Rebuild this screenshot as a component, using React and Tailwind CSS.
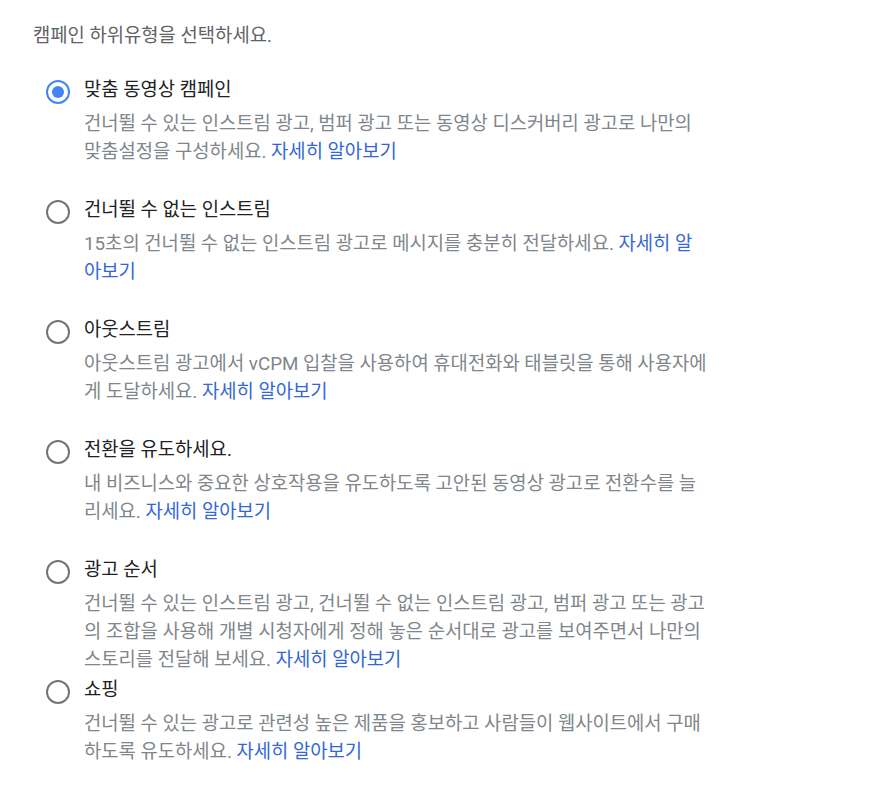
import React, { useState } from 'react';

const options = [
  {
    id: 'custom',
    title: '맞춤 동영상 캠페인',
    desc: '건너뛸 수 있는 인스트림 광고, 범퍼 광고 또는 동영상 디스커버리 광고로 나만의 맞춤설정을 구성하세요.',
  },
  {
    id: 'nonskip',
    title: '건너뛸 수 없는 인스트림',
    desc: '15초의 건너뛸 수 없는 인스트림 광고로 메시지를 충분히 전달하세요.',
  },
  {
    id: 'outstream',
    title: '아웃스트림',
    desc: '아웃스트림 광고에서 vCPM 입찰을 사용하여 휴대전화와 태블릿을 통해 사용자에게 도달하세요.',
  },
  {
    id: 'conversion',
    title: '전환을 유도하세요.',
    desc: '내 비즈니스와 중요한 상호작용을 유도하도록 고안된 동영상 광고로 전환수를 늘리세요.',
  },
  {
    id: 'sequence',
    title: '광고 순서',
    desc: '건너뛸 수 있는 인스트림 광고, 건너뛸 수 없는 인스트림 광고, 범퍼 광고 또는 광고의 조합을 사용해 개별 시청자에게 정해 놓은 순서대로 광고를 보여주면서 나만의 스토리를 전달해 보세요.',
  },
  {
    id: 'shopping',
    title: '쇼핑',
    desc: '건너뛸 수 있는 광고로 관련성 높은 제품을 홍보하고 사람들이 웹사이트에서 구매하도록 유도하세요.',
  },
];

const Radio = ({ checked }) => (
  <span
    className={`flex h-[24px] w-[24px] shrink-0 items-center justify-center rounded-full border-2 ${
      checked ? 'border-[#4285f4]' : 'border-[#757575]'
    }`}
  >
    {checked && <span className="h-[12px] w-[12px] rounded-full bg-[#4285f4]" />}
  </span>
);

export default function App() {
  const [selected, setSelected] = useState('custom');

  return (
    <div
      className="min-h-[790px] bg-white pl-[33px] pt-[22px] text-[18.8px]"
      style={{ fontFamily: 'Roboto, "Noto Sans CJK KR", sans-serif' }}
    >
      <p className="leading-[28px] text-[#5f6368]">캠페인 하위유형을 선택하세요.</p>

      <div className="mt-[26px] flex flex-col">
        {options.map((opt) => (
          <div
            key={opt.id}
            className="flex h-[120px] cursor-pointer gap-[14px] pl-[13px]"
            onClick={() => setSelected(opt.id)}
          >
            <div className="pt-[4px]">
              <Radio checked={selected === opt.id} />
            </div>
            <div className="w-[624px]">
              <div className="leading-[28px] text-[#202124]">{opt.title}</div>
              <p className="mt-[6px] leading-[28px] text-[#80868b]">
                {opt.desc}{' '}
                <a href="#" className="text-[#3367d6]" onClick={(e) => e.preventDefault()}>
                  자세히 알아보기
                </a>
              </p>
            </div>
          </div>
        ))}
      </div>
    </div>
  );
}
